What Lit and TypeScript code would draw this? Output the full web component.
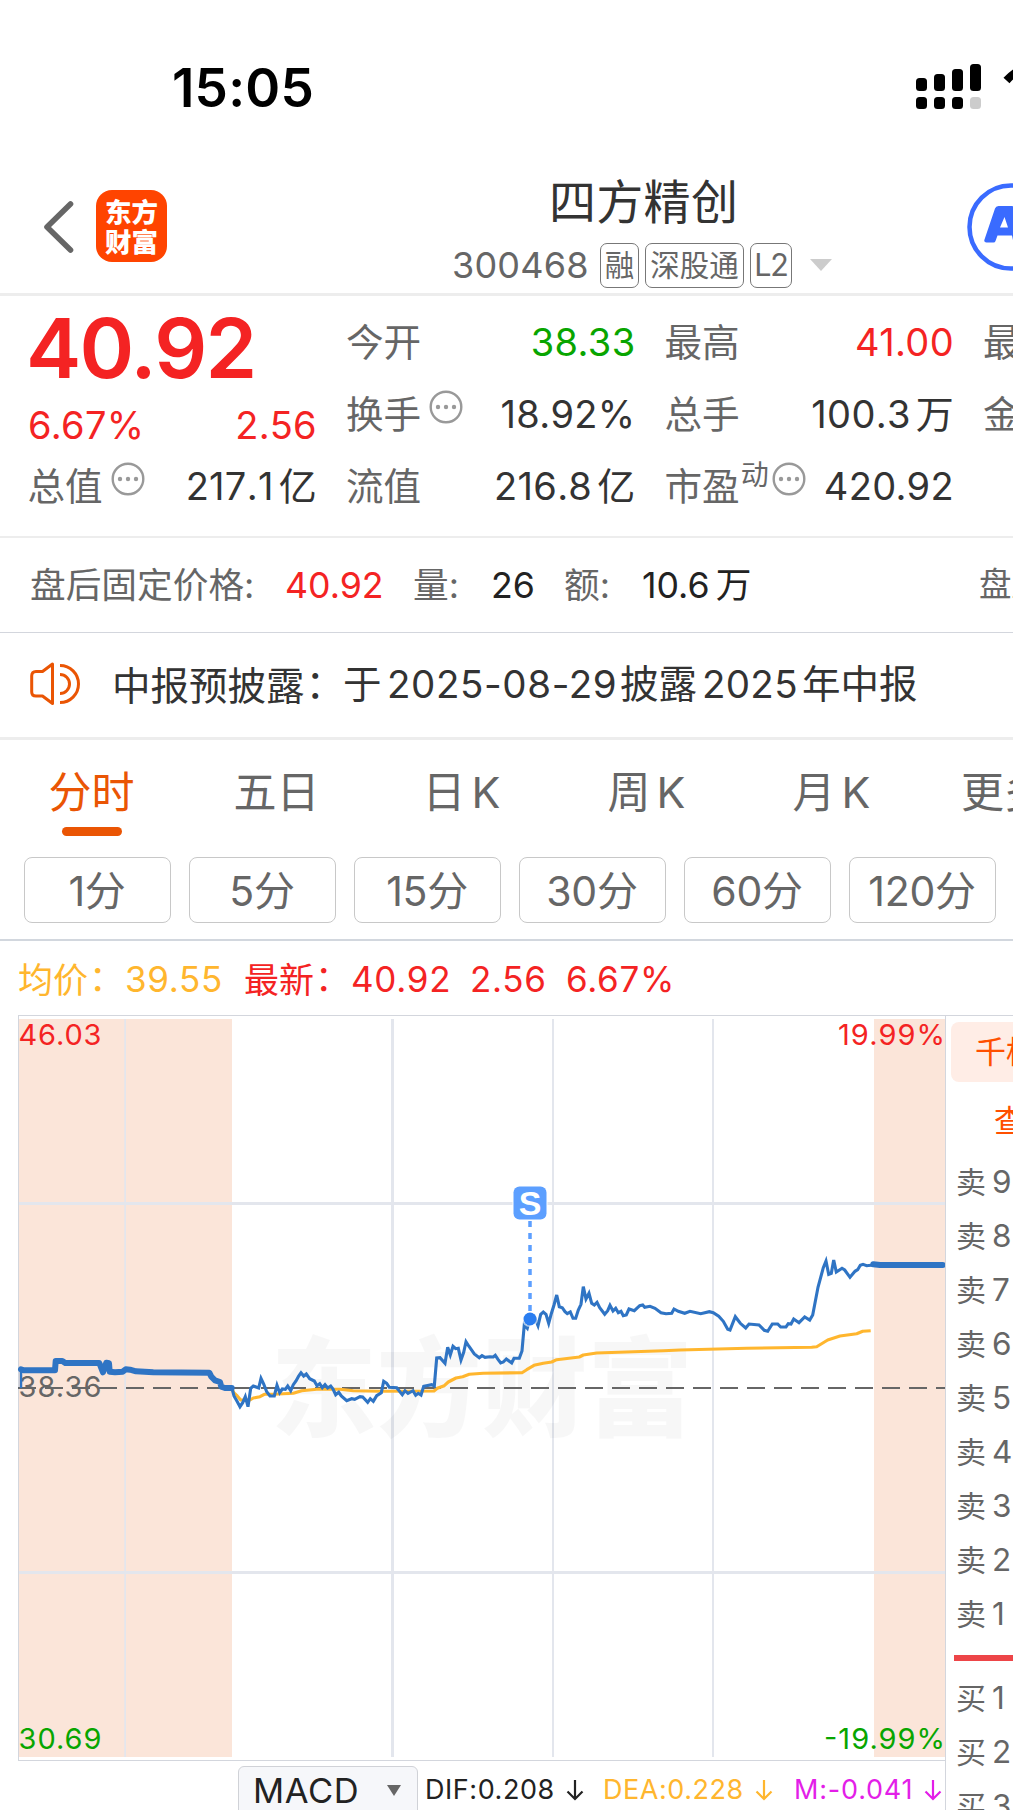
import { LitElement, html, svg, css } from "lit";
import { customElement, property } from "lit/decorators.js";

type Pt = [number, number];

/* Traces are sampled on local grids: [originX, originY, points in third-pixels]. */
const trace = (ox: number, oy: number, flat: number[]): Pt[] => {
  const out: Pt[] = [];
  for (let i = 0; i < flat.length; i += 2) out.push([ox + flat[i] / 3, oy + flat[i + 1] / 3]);
  return out;
};
const toPoints = (pts: Pt[]) => pts.map(([x, y]) => `${x.toFixed(1)},${y.toFixed(1)}`).join(" ");

const preMarket = trace(0, 1000, [
  63, 1108, 72, 1111, 165, 1111, 167, 1083, 187, 1083, 196, 1089, 298, 1089, 309, 1117, 319, 1088, 327, 1090, 329, 1115,
  345, 1117, 368, 1115, 377, 1108, 390, 1109, 408, 1114, 460, 1117, 628, 1118, 634, 1130, 645, 1141, 660, 1146, 664, 1160,
  675, 1164, 695, 1164,
]);
const session = [
  ...trace(230, 1300, [
    5, 262, 12, 288, 22, 305, 30, 320, 38, 308, 46, 290, 54, 320, 62, 265, 70, 258, 86, 264, 93, 235, 101, 252, 110, 275,
    120, 288, 133, 288, 141, 256, 149, 278, 157, 267, 166, 268, 173, 258, 182, 272, 190, 254, 198, 243, 206, 228, 213, 218,
    221, 228, 229, 222, 239, 236, 253, 243, 261, 257, 269, 251, 277, 263, 285, 254, 293, 264, 302, 258, 309, 267, 317, 284,
    326, 277, 334, 288, 350, 302, 365, 296, 374, 298, 390, 290, 398, 291, 413, 307, 421, 296, 430, 304, 440, 287, 454, 278,
    461, 244, 470, 250, 478, 262, 500, 263, 517, 284, 525, 272, 534, 280, 549, 272, 557, 286, 565, 280, 573, 285, 581, 259,
    605, 254, 613, 258, 620, 174, 630, 173, 645, 190, 653, 142, 661, 165, 669, 139, 677, 146, 685, 145, 693, 180, 701, 157,
    708, 125, 716, 138,
  ]),
  ...trace(430, 1160, [
    133, 582, 148, 593, 156, 587, 165, 592, 180, 590, 190, 591, 196, 586, 204, 598, 212, 609, 220, 606, 229, 597, 245, 609,
    252, 595, 268, 595, 276, 573, 283, 494, 292, 505, 300, 475, 312, 468, 324, 497, 332, 463, 340, 456, 348, 463, 356, 490,
    364, 461, 372, 435, 380, 405, 388, 440, 397, 443, 405, 455, 412, 461, 421, 456, 429, 475, 437, 475, 445, 450, 453, 433,
    460, 380, 468, 417, 477, 400, 485, 430, 493, 435, 501, 427, 509, 443, 524, 463, 533, 452, 540, 436, 549, 453, 557, 445,
    565, 458, 573, 454, 580, 467, 589, 465, 597, 447, 613, 452, 629, 437, 638, 435, 644, 442, 660, 439, 675, 445, 693, 458,
    708, 461, 725, 460, 732, 447, 745, 454, 764, 460, 780, 454, 812, 461, 838, 455, 850, 458, 866, 469, 880, 484,
  ]),
  ...trace(680, 1000, [
    143, 988, 150, 990, 166, 950, 181, 970, 197, 984, 207, 972, 237, 975, 253, 991, 263, 994, 277, 972, 293, 972, 302, 981,
    318, 981, 325, 971, 333, 972, 341, 957, 357, 968, 374, 951, 389, 960, 398, 945, 414, 862, 430, 803, 438, 783, 446, 823,
    454, 820, 461, 780, 469, 816, 486, 805, 494, 810, 510, 832, 525, 814, 533, 809, 541, 796, 549, 793, 560, 797, 580, 795,
  ]),
];
const afterHours = trace(680, 1000, [580, 793, 600, 795, 788, 795]);
const average = [
  ...trace(230, 1300, [
    5, 265, 12, 279, 22, 288, 32, 300, 60, 300, 70, 294, 90, 290, 103, 283, 130, 283, 190, 280, 215, 272, 260, 268, 330,
    268, 370, 272, 450, 274, 612, 273, 622, 265, 643, 257, 655, 246,
  ]),
  ...trace(430, 1160, [
    78, 654, 98, 650, 118, 643, 160, 640, 276, 638, 290, 629, 312, 616, 340, 610, 365, 606, 380, 599, 448, 591, 460, 585,
    500, 579, 700, 572,
  ]),
  ...trace(680, 1000, [0, 1050, 200, 1045, 395, 1042, 410, 1040, 443, 1020, 480, 1008, 530, 1001, 548, 994, 572, 992]),
];

const base = css`
  :host {
    font-family: Inter, "Noto Sans CJK SC", sans-serif;
    box-sizing: border-box;
  }
  * {
    box-sizing: border-box;
  }
  svg {
    display: block;
    flex: none;
  }
  .colon {
    font-family: "Noto Sans CJK TC", sans-serif;
    font-feature-settings: "halt";
    margin-left: 1px;
  }
`;

@customElement("more-dots")
class MoreDots extends LitElement {
  static styles = css`
    :host {
      display: block;
      flex: none;
      width: 34px;
      height: 34px;
    }
    svg {
      display: block;
    }
  `;
  render() {
    return html`<svg width="34" height="34" viewBox="0 0 34 34">
      <circle cx="17" cy="17" r="15.3" fill="none" stroke="#999" stroke-width="2.4" />
      <g fill="#999"><circle cx="9" cy="17" r="2.2" /><circle cx="17" cy="17" r="2.2" /><circle cx="25" cy="17" r="2.2" /></g>
    </svg>`;
  }
}

@customElement("status-bar")
class StatusBar extends LitElement {
  static styles = [
    base,
    css`
      :host {
        display: flex;
        justify-content: space-between;
        align-items: flex-start;
        height: 176px;
        padding: 58px 0 0 172px;
      }
      .time {
        font-size: 53px;
        line-height: 60px;
        font-weight: 600;
        letter-spacing: 0.2px;
        color: #000;
      }
    `,
  ];
  render() {
    return html`<span class="time">15:05</span>
      <svg width="97" height="60" viewBox="0 0 97 60">
        <rect x="0" y="20" width="11" height="13" rx="3.5" />
        <rect x="18" y="16" width="11" height="17" rx="3.5" />
        <rect x="36" y="11" width="11" height="22" rx="3.5" />
        <rect x="54" y="6" width="11" height="27" rx="3.5" />
        <rect x="0" y="39" width="11" height="12" rx="3.5" />
        <rect x="18" y="39" width="11" height="12" rx="3.5" />
        <rect x="36" y="39" width="11" height="12" rx="3.5" />
        <rect x="54" y="39" width="11" height="12" rx="3.5" fill="#ccc" />
        <path d="M90.5 22.5 C 98 14 108 9 118 9" fill="none" stroke="#000" stroke-width="8" />
      </svg>`;
  }
}

@customElement("title-bar")
class TitleBar extends LitElement {
  static styles = [
    base,
    css`
      :host {
        display: flex;
        align-items: flex-start;
        height: 120px;
        border-bottom: 3px solid #ededed;
      }
      .back {
        margin: 24px 0 0 42px;
      }
      .logo {
        display: flex;
        flex-direction: column;
        align-items: center;
        justify-content: center;
        width: 71px;
        height: 72px;
        margin: 14px 0 0 22px;
        border-radius: 16px;
        background: #ff4400;
        color: #fff;
        font-family: "Noto Sans CJK SC", sans-serif;
        font-weight: 900;
        font-size: 26.5px;
        line-height: 30px;
      }
      .name {
        width: 380px;
        margin-left: 285px;
      }
      .title {
        height: 52px;
        padding-left: 97px;
        line-height: 52px;
        font-size: 47px;
        letter-spacing: 0.3px;
        color: #333;
      }
      .sub {
        display: flex;
        align-items: center;
        gap: 6px;
        height: 46px;
        margin-top: 14px;
        color: #666;
        white-space: nowrap;
      }
      .code {
        width: 142px;
        font-size: 36px;
        line-height: 46px;
        letter-spacing: 0.2px;
      }
      .tag {
        width: 39px;
        height: 45px;
        line-height: 42px;
        border: 1.5px solid #777;
        border-radius: 7px;
        font-size: 29.5px;
        text-align: center;
      }
      .wide {
        width: 99px;
      }
      .lv {
        width: 42px;
        font-size: 30.5px;
        letter-spacing: -1.2px;
      }
      .arrow {
        margin-left: 12px;
      }
      .ai {
        margin: 6px 0 0 133px;
      }
    `,
  ];
  render() {
    return html`<svg class="back" width="32" height="54" viewBox="0 0 32 54">
        <path d="M28.5 4 L5 27 L28.5 50" fill="none" stroke="#666" stroke-width="5.6" stroke-linecap="round" stroke-linejoin="round" />
      </svg>
      <div class="logo"><span>东方</span><span>财富</span></div>
      <div class="name">
        <div class="title">四方精创</div>
        <div class="sub">
          <span class="code">300468</span><span class="tag">融</span><span class="tag wide">深股通</span
          ><span class="tag lv">L2</span>
          <svg class="arrow" width="22" height="12" viewBox="0 0 22 12"><path d="M0 0H22L11 12Z" fill="#ccc" /></svg>
        </div>
      </div>
      <svg class="ai" width="48" height="90" viewBox="0 0 48 90">
        <circle cx="46" cy="45" r="41.5" fill="none" stroke="#3a6bff" stroke-width="4.5" />
        <path
          transform="translate(2.5 0)"
          fill="#3a6bff"
          fill-rule="evenodd"
          d="M19 60.500Q16 60.500 17 57.500L27.500 26.500Q28.300 24 31 24H44Q46.500 24 47.300 26.500L57 60.500H46L44.500 53.500H30L28 59Q27.500 60.500 26 60.500ZM32.500 45.500H40.500L37 35Z"
        />
      </svg>`;
  }
}

@customElement("quote-panel")
class QuotePanel extends LitElement {
  static styles = [
    base,
    css`
      :host {
        display: flex;
        gap: 29.5px;
        height: 242px;
        padding: 10px 0 0 28px;
        border-bottom: 2px solid #ededed;
        color: #333;
        font-size: 38px;
        line-height: 73px;
        overflow: hidden;
      }
      .col {
        flex: none;
        width: 289px;
      }
      .row {
        display: flex;
        justify-content: space-between;
        height: 72px;
      }
      .label {
        display: flex;
        color: #666;
        font-size: 37.6px;
        margin-left: -0.5px;
      }
      .value {
        display: flex;
        letter-spacing: 0.35px;
      }
      .wan {
        font-kerning: none;
        letter-spacing: 0.3px;
      }
      .unit {
        margin-left: 5px;
      }
      .price {
        height: 84px;
        margin-left: -2px;
        line-height: 84px;
        font-size: 83px;
        font-weight: 600;
        letter-spacing: -1.7px;
        color: #f42323;
      }
      .change {
        height: 60px;
        line-height: 71px;
      }
      .up {
        color: #f42323;
      }
      .down {
        color: #08a500;
      }
      more-dots {
        margin: 12px 0 0 8px;
      }
      .tight {
        margin-left: 3px;
      }
      .sup {
        font-size: 28px;
        line-height: 50px;
        margin-left: 1px;
      }
    `,
  ];
  render() {
    return html`<div class="col">
        <div class="price">40.92</div>
        <div class="row change up"><span class="value">6.67%</span><span class="value">2.56</span></div>
        <div class="row">
          <span class="label">总值<more-dots></more-dots></span
          ><span class="value wan">217.1<span class="unit">亿</span></span>
        </div>
      </div>
      <div class="col">
        <div class="row"><span class="label">今开</span><span class="value down">38.33</span></div>
        <div class="row">
          <span class="label">换手<more-dots></more-dots></span><span class="value">18.92%</span>
        </div>
        <div class="row">
          <span class="label">流值</span><span class="value wan">216.8<span class="unit">亿</span></span>
        </div>
      </div>
      <div class="col">
        <div class="row"><span class="label">最高</span><span class="value up">41.00</span></div>
        <div class="row">
          <span class="label">总手</span><span class="value wan">100.3<span class="unit">万</span></span>
        </div>
        <div class="row">
          <span class="label">市盈<span class="sup">动</span><more-dots class="tight"></more-dots></span
          ><span class="value">420.92</span>
        </div>
      </div>
      <div class="col">
        <div class="row"><span class="label">最</span></div>
        <div class="row"><span class="label">金</span></div>
      </div>`;
  }
}

@customElement("after-hours-row")
class AfterHoursRow extends LitElement {
  static styles = [
    base,
    css`
      :host {
        display: grid;
        grid-template-columns: 255px 128px 78px 73px 78px 337px 70px;
        align-items: center;
        height: 95px;
        padding: 0 0 1px 30px;
        border-bottom: 1px solid #d3d6dd;
        font-size: 35.7px;
        line-height: 46px;
        color: #666;
        white-space: nowrap;
        overflow: hidden;
      }
      .red {
        color: #f42323;
      }
      .dark {
        display: flex;
        color: #222;
        letter-spacing: 0;
      }
      .unit {
        margin-left: 6px;
      }
      .small {
        font-size: 32.5px;
      }
    `,
  ];
  render() {
    return html`<span>盘后固定价格:</span><span class="red">40.92</span><span>量:</span><span class="dark">26</span
      ><span>额:</span><span class="dark">10.6<span class="unit">万</span></span><span class="small">盘后</span>`;
  }
}

@customElement("notice-row")
class NoticeRow extends LitElement {
  static styles = [
    base,
    css`
      :host {
        display: grid;
        grid-template-columns: 82px 231px 44px 233px 82px 100px auto;
        align-items: center;
        height: 107px;
        padding: 0 0 2px 30px;
        border-bottom: 3px solid #ededed;
        font-size: 38.5px;
        line-height: 50px;
        color: #333;
        white-space: nowrap;
      }
      .num {
        letter-spacing: 0.6px;
      }
      .year {
        letter-spacing: 0.3px;
      }
    `,
  ];
  render() {
    return html`<svg width="50" height="44" viewBox="0 0 50 44" fill="none" stroke="#ea5504" stroke-width="3">
        <path d="M22.500 2 L12.500 9.500 H6 Q1.700 9.500 1.700 14 V30 Q1.700 34 6 34 H12.500 L22.500 41.500 Z" stroke-linejoin="round" />
        <path d="M30 3.500 A18.500 18.500 0 0 1 30 40.500 M30 12.500 A9.500 9.500 0 0 1 30 31.500" />
      </svg>
      <span>中报预披露<span class="colon">：</span></span><span>于</span><span class="num">2025-08-29</span
      ><span>披露</span><span class="year">2025</span><span>年中报</span>`;
  }
}

@customElement("period-tabs")
class PeriodTabs extends LitElement {
  static styles = [
    base,
    css`
      :host {
        display: block;
        height: 201px;
        border-bottom: 2px solid #d2d7de;
        color: #666;
        overflow: hidden;
      }
      .tabs {
        display: grid;
        grid-template-columns: repeat(5, 185px) 160px;
        height: 117px;
        padding-top: 22px;
        font-size: 43px;
        line-height: 60px;
      }
      .tab {
        display: flex;
        flex-direction: column;
        align-items: center;
        padding-right: 2px;
        white-space: nowrap;
      }
      .on {
        color: #ea5504;
      }
      .on::after {
        content: "";
        width: 60px;
        height: 9px;
        border-radius: 4.5px;
        background: #ea5504;
        margin-top: 5px;
      }
      .k {
        display: inline-block;
        margin-left: 6px;
      }
      .chips {
        display: flex;
        gap: 18px;
        padding-left: 24px;
      }
      .chip {
        width: 147px;
        height: 66px;
        padding-right: 1px;
        border: 1px solid #c8c8c8;
        border-radius: 8px;
        text-align: center;
        font-size: 41px;
        line-height: 67px;
        letter-spacing: -0.3px;
      }
    `,
  ];
  render() {
    const k = html`<span class="k">K</span>`;
    return html`<div class="tabs">
        <div class="tab on"><span>分时</span></div>
        <div class="tab"><span>五日</span></div>
        <div class="tab"><span>日${k}</span></div>
        <div class="tab"><span>周${k}</span></div>
        <div class="tab"><span>月${k}</span></div>
        <div class="tab"><span>更多</span></div>
      </div>
      <div class="chips">
        ${[1, 5, 15, 30, 60, 120].map((n) => html`<span class="chip">${n}分</span>`)}
      </div>`;
  }
}

@customElement("latest-row")
class LatestRow extends LitElement {
  static styles = [
    base,
    css`
      :host {
        display: grid;
        grid-template-columns: 107px 119px 107px 119px 96px auto;
        align-items: center;
        height: 74px;
        padding: 2px 0 0 18px;
        font-size: 35px;
        line-height: 46px;
        color: #f42323;
        white-space: nowrap;
      }
      .avg {
        color: #ffb62e;
      }
      .n {
        letter-spacing: 0.7px;
      }
    `,
  ];
  render() {
    const c = html`<span class="colon">：</span>`;
    return html`<span class="avg">均价${c}</span><span class="avg n">39.55</span><span>最新${c}</span
      ><span class="n">40.92</span><span class="n">2.56</span><span class="n">6.67%</span>`;
  }
}

@customElement("minute-chart")
class MinuteChart extends LitElement {
  static styles = [
    base,
    css`
      :host {
        display: block;
      }
      .lab {
        font-family: Inter, sans-serif;
        font-size: 29px;
      }
      .mark {
        font-family: "Noto Sans CJK SC", sans-serif;
        font-weight: 900;
        font-size: 108px;
      }
      .badge {
        font-family: "Liberation Sans", Arial, sans-serif;
        font-weight: 700;
        font-size: 34px;
      }
    `,
  ];
  render() {
    return html`<svg width="946" height="746" viewBox="0 1015 946 746">
      <g fill="#fbe5d9">
        <rect x="19" y="1019" width="213" height="738" />
        <rect x="874" y="1019" width="71" height="738" />
      </g>
      <g fill="#e3e6ed">
        <rect x="124.300" y="1019" width="1.700" height="738" />
        <rect x="391" y="1019" width="3" height="738" />
        <rect x="552" y="1019" width="2" height="738" />
        <rect x="712" y="1019" width="2" height="738" />
        <rect x="19" y="1202" width="926" height="3" />
        <rect x="19" y="1571" width="926" height="3" />
      </g>
      <text class="mark" x="271" y="1428" textLength="422" lengthAdjust="spacingAndGlyphs" fill="#000" fill-opacity=".032">
        东方财富
      </text>
      <g fill="#d3d6dd">
        <rect x="18" y="1015" width="928" height="1" />
        <rect x="18" y="1015" width="1" height="746" />
        <rect x="18" y="1760" width="928" height="1" />
      </g>
      <path d="M18 1388H945" stroke="#666" stroke-width="2" stroke-dasharray="18 9" />
      <g class="lab">
        <text x="18.500" y="1045" textLength="83" fill="#f42323">46.03</text>
        <text x="945" y="1045" text-anchor="end" textLength="107" fill="#f42323">19.99%</text>
        <text x="18.500" y="1397" textLength="83" fill="#666">38.36</text>
        <text x="18.500" y="1749" textLength="83" fill="#08a500">30.69</text>
        <text x="945" y="1749" text-anchor="end" textLength="121" fill="#08a500">-19.99%</text>
      </g>
      <g fill="none" stroke-linejoin="round">
        <polyline points=${toPoints(average)} stroke="#ffb62e" stroke-width="3.100" />
        <path d="M21 1370V1388" stroke="#2f74c4" stroke-width="2.500" />
        <polyline points=${toPoints(session)} stroke="#2f74c4" stroke-width="3.100" stroke-linejoin="miter" />
        <polyline points=${toPoints(preMarket)} stroke="#2f74c4" stroke-width="6" stroke-linecap="round" />
        <polyline points=${toPoints(afterHours)} stroke="#2f74c4" stroke-width="6" stroke-linecap="round" />
      </g>
      ${svg`<g>
        <circle cx="530" cy="1319" r="8" fill="#fff" fill-opacity=".6" />
        <circle cx="530" cy="1319" r="6.500" fill="#2a7df0" />
        <path d="M530 1221V1313" stroke="#5c9fff" stroke-width="3.500" stroke-dasharray="6 6" />
        <rect x="512.500" y="1185.500" width="35" height="35" rx="7" fill="#fff" />
        <rect x="513.500" y="1186.500" width="33" height="33" rx="6" fill="#5c9fff" />
        <text class="badge" x="530" y="1215" text-anchor="middle" fill="#fff">S</text>
      </g>`}
    </svg>`;
  }
}

@customElement("indicator-row")
class IndicatorRow extends LitElement {
  static styles = [
    base,
    css`
      :host {
        display: grid;
        grid-template-columns: 187px 178px 191px auto;
        padding: 5px 0 0 238px;
        height: 49px;
        overflow: hidden;
      }
      .pick {
        display: flex;
        align-items: center;
        justify-content: space-between;
        width: 180px;
        height: 52px;
        padding: 0 16px 3px 14px;
        border: 1.500px solid #d0d2d7;
        border-radius: 6px;
        background: #f6f7fa;
        font-size: 34.5px;
        letter-spacing: 0.6px;
        color: #222;
      }
      .item {
        display: flex;
        align-items: center;
        height: 47px;
        gap: 11px;
        font-size: 27px;
        line-height: 47px;
        white-space: nowrap;
        letter-spacing: 0.55px;
        color: #222;
      }
      .dea {
        color: #ffb62e;
      }
      .m {
        color: #e31ee8;
        letter-spacing: 0.8px;
      }
    `,
  ];
  render() {
    const down = html`<svg width="18" height="22" viewBox="0 0 18 22" fill="none" stroke="currentColor" stroke-width="2.200">
      <path d="M9 1V20M1.500 12.500L9 20L16.500 12.500" />
    </svg>`;
    return html`<div class="pick">
        MACD<svg width="14" height="11" viewBox="0 0 14 11"><path d="M0 0H14L7 11Z" fill="#666" /></svg>
      </div>
      <div class="item">DIF:0.208${down}</div>
      <div class="item dea">DEA:0.228${down}</div>
      <div class="item m">M:-0.041${down}</div>`;
  }
}

@customElement("order-book")
class OrderBook extends LitElement {
  static styles = [
    base,
    css`
      :host {
        display: block;
        width: 68px;
        height: 795px;
        border-top: 1px solid #d3d6dd;
        border-left: 1px solid #d3d6dd;
        padding-top: 6px;
        overflow: hidden;
        white-space: nowrap;
        color: #666;
      }
      .depth {
        height: 60px;
        width: 90px;
        margin-left: 5px;
        padding-left: 24px;
        border-radius: 8px;
        background: #ffede6;
        color: #ff5000;
        font-size: 31px;
        line-height: 60px;
      }
      .look {
        height: 73px;
        padding: 3px 0 0 48px;
        color: #ff5000;
        font-size: 31px;
        line-height: 72px;
      }
      .level {
        display: grid;
        grid-template-columns: 36px auto;
        height: 54px;
        padding-left: 10px;
        font-size: 30px;
        line-height: 54px;
      }
      .n {
        font-size: 31.500px;
      }
      .bar {
        height: 6px;
        margin: 14px 0 10px 8px;
        background: #ed4548;
      }
    `,
  ];
  @property({ attribute: false }) sells = [9, 8, 7, 6, 5, 4, 3, 2, 1];
  @property({ attribute: false }) buys = [1, 2, 3];
  render() {
    const level = (side: string, n: number) =>
      html`<div class="level"><span>${side}</span><span class="n">${n}</span></div>`;
    return html`<div class="depth">千档</div>
      <div class="look">查</div>
      ${this.sells.map((n) => level("卖", n))}
      <div class="bar"></div>
      ${this.buys.map((n) => level("买", n))}`;
  }
}

@customElement("app-root")
class AppRoot extends LitElement {
  static styles = [
    base,
    css`
      :host {
        display: block;
        width: 1013px;
        height: 1810px;
        overflow: hidden;
        background: #fff;
      }
      .body {
        display: grid;
        grid-template-columns: 945px 68px;
      }
    `,
  ];
  render() {
    return html`<status-bar></status-bar>
      <title-bar></title-bar>
      <quote-panel></quote-panel>
      <after-hours-row></after-hours-row>
      <notice-row></notice-row>
      <period-tabs></period-tabs>
      <latest-row></latest-row>
      <div class="body">
        <div>
          <minute-chart></minute-chart>
          <indicator-row></indicator-row>
        </div>
        <order-book></order-book>
      </div>`;
  }
}
